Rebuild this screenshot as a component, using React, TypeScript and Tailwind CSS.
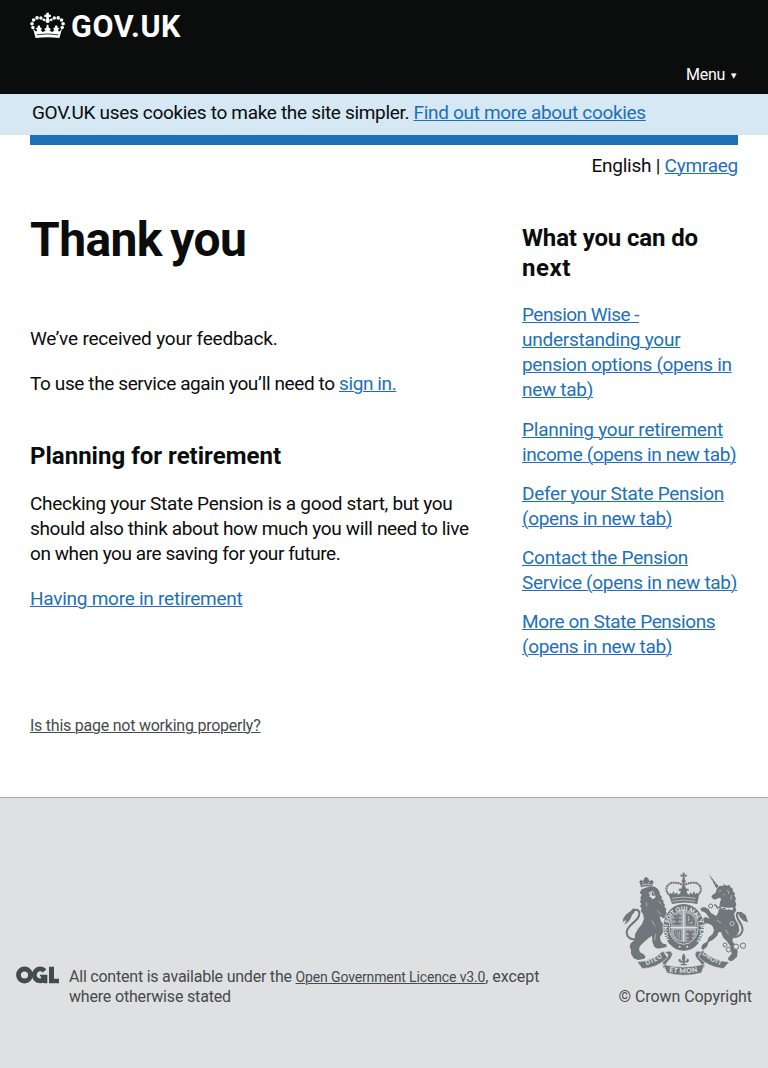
import React from 'react';

const link = 'text-[#1d70b8] underline decoration-1 underline-offset-1';

function Crown() {
  return (
    <svg className="h-[27px] w-[35px]" viewBox="0 0 35 27" fill="#fff">
      <path d="M16.300.8h2.600v2h2v2.200h-2v2.600h-2.600V5h-2V2.800h2z" />
      <circle cx="17.600" cy="8.800" r="2.200" />
      <circle cx="13.900" cy="7.800" r="1.400" />
      <circle cx="10.900" cy="6" r="1.700" />
      <circle cx="7" cy="5.900" r="1.800" />
      <circle cx="3.600" cy="8" r="1.800" />
      <circle cx="2" cy="11.700" r="1.800" />
      <circle cx="2.900" cy="15.500" r="1.700" />
      <circle cx="21.300" cy="7.800" r="1.400" />
      <circle cx="24.300" cy="6" r="1.700" />
      <circle cx="28.200" cy="5.900" r="1.800" />
      <circle cx="31.500" cy="8" r="1.800" />
      <circle cx="33.100" cy="11.700" r="1.800" />
      <circle cx="32.200" cy="15.500" r="1.700" />
      <path d="M3 16.500l3 3.300 1.200-1.800-1.600-1.500 1.800-1 .6-2h1.800l.5 2 1.800.9-1.300 1.500 1.800 2.100 3-1.300-1.500-1.700 2.200-1.200.5-3h1.500l.5 3 2.200 1.200-1.500 1.700 3 1.300 1.800-2.100-1.300-1.500 1.800-.9.500-2h1.800l.6 2 1.800 1-1.600 1.500 1.200 1.800 3-3.300-2.700 9.500q-12-1.600-23.800 0z" />
      <path d="M6.800 22.800q10.700-1.800 21.400 0" fill="none" stroke="#0b0c0c" strokeWidth=".8" />
    </svg>
  );
}

function OglLogo() {
  return (
    <svg className="mt-[-1px] h-[18px] w-[44px] shrink-0" viewBox="18 35 132 54" fill="none" stroke="#454a4c">
      <circle cx="43.500" cy="62" r="18" strokeWidth="14.500" />
      <path d="M104 49.500A18 18 0 1 0 104 74" strokeWidth="14.500" />
      <path d="M89 61h23v26h-10z" fill="#454a4c" stroke="none" />
      <path d="M117 37h15v36h15v14h-30z" fill="#454a4c" stroke="none" />
    </svg>
  );
}

function CoatOfArms() {
  return (
    <svg className="h-[104px] w-[127px]" viewBox="37 22 381 312" fill="#6f777b" stroke="none" fontFamily="Lato, 'Liberation Sans', sans-serif" fontWeight="900">
      <defs>
        <path id="garter" d="M182 229A49 58 0 1 1 262 229" />
        <path id="dieu" d="M110 302Q140 292 165 274" />
        <path id="motto" d="M178 321Q222 331 268 320" />
        <path id="droit" d="M276 269Q304 292 337 303" />
      </defs>

      {/* royal crown */}
      <path d="M218 24h8l-2 7 7-2v8l-7-2 2 8h-8l2-8-7 2v-8l7 2z" />
      <circle cx="222" cy="49" r="6" />
      <g fill="none" stroke="#6f777b" strokeWidth="6">
        <path d="M182 93C160 77 172 56 190 54Q211 54 220 62" strokeDasharray="6 1.500" />
        <path d="M262 93C284 77 272 56 254 54Q233 54 224 62" strokeDasharray="6 1.500" />
        <path d="M222 53v28" />
      </g>
      <path d="M178 92l4-8 5 5 4-10 5 10 6-6 3 8 7-6 1-7h-6v-6h7l4-7h8l4 7h7v6h-6l1 7 7 6 3-8 6 6 5-10 4 10 5-5 6 8-5 26q-38-9-76 0z" />
      <path d="M186 101q36-8 72 0M188 110q34-7 68 0" fill="none" stroke="#dee0e2" strokeWidth="2" />

      {/* lion */}
      <path d="M94 68l-5-17 5-6 6 5 3-8 7-5 6 5 4 8 6-5 6 6-6 15q-16-4-32 2z" />
      <circle cx="109" cy="40" r="3" />
      <path d="M96 61q15-4 30-1M99 52l3 5M119 51l-3 5" fill="none" stroke="#dee0e2" strokeWidth="2" />
      <path d="M96 74L112 68L132 65L144 72L150 82L151 90L157 97L155 103L162 108L161 115L166 120L164 127L170 132L168 140L174 149L176 160L170 169L162 161L150 155L153 168L160 178L163 192L158 207L151 216L153 229L160 237L170 239L171 247L145 252L134 247L128 231L127 213L116 221L104 231L91 244L88 253L91 263L101 268L108 276L104 282L85 286L72 281L64 267L64 255L60 247L63 236L75 226L76 209L85 193L97 178L103 162L100 148L93 139L96 132L91 124L95 118L90 110L94 106L92 99L96 90L90 84Z" />
      <path d="M120 82l8-3 5 3 1 9 4 2-2 7-8 4-4-6-5-2 2-6-4-3z" fill="#dee0e2" />
      <path d="M126 81l6 2-1 5 5 5-7 1-3-5zM120 86l4 1-2 3z" />
      <path d="M146 108l9 12M143 137l10 12M126 168l11 17M138 207l-3 20M109 112l3 13" fill="none" stroke="#dee0e2" strokeWidth="1.500" />
      <path d="M82 222C60 229 45 211 54 193C65 172 90 168 89 145C88 132 72 133 69 142" fill="none" stroke="#6f777b" strokeWidth="6" />
      <path d="M72 129q-8 11-16 15-11 6-16 19v9l10-7q-2 9-7 15 14-6 20-19 3-11 12-19z" />

      {/* unicorn */}
      <path d="M297 28l30 37-7 6z" />
      <path d="M312 46l-5 4M319 55l-5 5" stroke="#dee0e2" strokeWidth="1.500" />
      <path d="M321 73L329 64L342 63L342 57L350 63L359 61L363 68L370 73L369 79L376 86L374 93L379 101L376 109L380 119L377 127L380 137L373 148L377 164L386 179L389 197L383 211L371 219L368 228L378 243L384 260L382 276L369 288L360 289L354 282L366 267L362 245L351 229L340 218L334 202L326 203L323 213L309 226L297 232L292 246L280 256L274 250L279 239L292 231L297 218L309 208L313 197L309 185L300 178L289 176L284 181L276 177L278 162L288 157L300 162L291 148L283 141L275 140L272 131L284 127L294 132L305 146L320 154L326 142L329 126L331 112L335 102L329 99L321 103L313 105L305 98L308 91L318 84Z" />
      <path d="M317 121q19 15 53 11" fill="none" stroke="#dee0e2" strokeWidth="7" />
      <path d="M313 121l6 1 4 8 8-4 5 9 8-4 6 8 9-5" fill="none" stroke="#6f777b" strokeWidth="4" />
      <path d="M327 80l8-3M341 92l5-5M354 76l4 12M365 91l-1 14M322 166l12 9M347 195l10 14" fill="none" stroke="#dee0e2" strokeWidth="1.800" />
      <path d="M372 217C391 218 404 201 396 183C387 163 378 158 382 147C388 139 397 149 401 159" fill="none" stroke="#6f777b" strokeWidth="6" />
      <path d="M384 143l11-1 13 9 4 13 3 9-14-5-11-11z" />
      <g fill="none" stroke="#6f777b" strokeWidth="3">
        <circle cx="367" cy="177" r="6" stroke="#dee0e2" strokeWidth="2" />
        <circle cx="346" cy="241" r="6" />
        <circle cx="357" cy="255" r="7" />
        <circle cx="379" cy="246" r="8" fill="#dee0e2" />
        <circle cx="400" cy="243" r="8" />
        <circle cx="303" cy="124" r="6" />
        <circle cx="293" cy="137" r="4" />
      </g>

      {/* garter and shield */}
      <ellipse cx="222" cy="188" rx="63" ry="72" fill="#dee0e2" />
      <ellipse cx="222" cy="188" rx="61" ry="70" />
      <ellipse cx="222" cy="188" rx="43" ry="51" fill="none" stroke="#dee0e2" strokeWidth="2.500" />
      <text fontSize="17.500" fill="#eceeef"><textPath href="#garter" startOffset="4" textLength="238">HONI SOIT QUI MAL Y PENSE</textPath></text>
      <path d="M184 160q8-18 24-20h28q17 3 24 20v49q-8 18-24 22h-28q-17-4-24-22z" fill="#a5abae" />
      <path d="M222 137v96M182 189h80" stroke="#dee0e2" strokeWidth="3.500" />
      <g stroke="#6f777b" strokeWidth="5" fill="none">
        <path d="M191 154h24M188 165h27M188 177h27M194 151l14 31M207 147l-8 35" />
        <path d="M229 202h25M229 214h24M231 225h14M235 197l11 29M249 197l-12 29" />
        <path d="M232 150q25 5 21 30h-21zM239 158l10 14M248 157l-11 18" />
        <path d="M194 199q0 20 19 26V197zM200 199v18M206 199v22" strokeWidth="3" />
      </g>
      <path d="M198 236q24 12 48 0l4 11q-28 14-56 0z" />
      <circle cx="210" cy="246" r="3" fill="#dee0e2" />
      <circle cx="233" cy="246" r="3" fill="#dee0e2" />

      {/* motto ribbon */}
      <g stroke="#dee0e2" strokeWidth="2">
        <path d="M163 265q14-10 23-3 7 12-12 29-7 7-6 22l-8-4q-5-17 6-26 13-12 8-15z" />
        <path d="M281 265q-14-10-23-3-7 12 12 29 7 7 6 22l8-4q5-17-6-26-13-12-8-15z" />
        <path d="M82 291q45-1 78-32l14 20q-31 31-76 33z" />
        <path d="M267 278l11-22q32 32 81 36l-18 20q-44-4-74-34z" />
        <path d="M160 299q62 17 125-1l-10 27q-52 14-103 0z" />
      </g>
      <g fontSize="19" fill="#dee0e2">
        <text><textPath href="#dieu" textLength="54">DIEU</textPath></text>
        <text fontSize="21"><textPath href="#motto" textLength="86">ET MON</textPath></text>
        <text><textPath href="#droit" textLength="66">DROIT</textPath></text>
      </g>
      <path d="M222 266q-9 12-3 23-7 2-7-7-8 0-5 8 5 7 12 3v5h-6v4h18v-4h-6v-5q8 4 12-3 3-8-5-8 0 9-7 7 6-11-3-23z" />
    </svg>
  );
}

export default function App() {
  return (
    <div className="min-h-[1068px] bg-white font-[Roboto,'Liberation_Sans',sans-serif] text-[19px] leading-[25px] tracking-[-0.3px] text-[#0b0c0c]">
      <header className="flex h-[94px] flex-col justify-between bg-[#0b0c0c] px-[30px] pt-3 pb-[9px] text-white">
        <div className="flex h-[30px] gap-[6px]">
          <Crown />
          <span className="text-[30.5px] leading-[30px] font-bold tracking-[0.6px]">GOV.UK</span>
        </div>
        <div className="flex h-5 items-start justify-end gap-[6px] text-base leading-5">
          <span>Menu</span>
          <span className="w-[7px] pt-px text-[7px] leading-5 font-['DejaVu_Sans']">▼</span>
        </div>
      </header>

      <div className="h-[41px] bg-[#d5e8f3] px-8 pt-[6px] tracking-[-0.32px] whitespace-nowrap">
        GOV.UK uses cookies to make the site simpler.{' '}
        <a href="#" className={link}>Find out more about cookies</a>
      </div>

      <main className="mx-[30px] h-[662px] border-t-10 border-[#1d70b8]">
        <div className="mt-2 text-right tracking-[-0.25px]">
          English | <a href="#" className={link}>Cymraeg</a>
        </div>
        <div className="flex justify-between">
          <div className="w-[450px] pt-[37px] whitespace-nowrap">
            <h1 className="text-[48px] leading-[50px] font-bold tracking-[-0.6px] [word-spacing:-3px]">Thank you</h1>
            <p className="mt-[61px] tracking-[-0.2px]">We’ve received your feedback.</p>
            <p className="mt-5 tracking-[-0.39px]">
              To use the service again you’ll need to <a href="#" className={link}>sign in.</a>
            </p>
            <h2 className="mt-[45px] text-2xl leading-[30px] font-bold tracking-[0.01px]">Planning for retirement</h2>
            <p className="mt-5">
              Checking your State Pension is a good start, but you<br />
              <span className="tracking-[-0.35px]">should also think about how much you will need to live</span><br />
              <span className="tracking-[-0.43px]">on when you are saving for your future.</span>
            </p>
            <p className="mt-5 tracking-[-0.25px]"><a href="#" className={link}>Having more in retirement</a></p>
          </div>
          <aside className="w-[216px] pt-[45px] whitespace-nowrap">
            <h2 className="text-2xl leading-[30px] font-bold">
              <span className="tracking-[-0.14px]">What you can do</span><br />
              <span className="tracking-[0.5px]">next</span>
            </h2>
            <ul className="mt-[19px] flex flex-col gap-[14px]">
              <li className="mb-px"><a href="#" className={link}><span className="tracking-[-0.52px]">Pension Wise -</span><br /><span className="tracking-[-0.25px]">understanding your</span><br /><span className="tracking-[-0.34px]">pension options (opens in</span><br />new tab)</a></li>
              <li><a href="#" className={link}><span className="tracking-[-0.24px]">Planning your retirement</span><br /><span className="tracking-[-0.38px]">income (opens in new tab)</span></a></li>
              <li><a href="#" className={link}><span className="tracking-[-0.27px]">Defer your State Pension</span><br /><span className="tracking-[-0.35px]">(opens in new tab)</span></a></li>
              <li><a href="#" className={link}><span className="tracking-[-0.25px]">Contact the Pension</span><br />Service (opens in new tab)</a></li>
              <li><a href="#" className={link}><span className="tracking-[-0.37px]">More on State Pensions</span><br /><span className="tracking-[-0.35px]">(opens in new tab)</span></a></li>
            </ul>
          </aside>
        </div>
        <p className="mt-[57px] text-base leading-5 tracking-[-0.24px] text-[#454a4c]">
          <a href="#" className="underline decoration-1 underline-offset-1">Is this page not working properly?</a>
        </p>
      </main>

      <footer className="flex h-[271px] justify-between border-t border-[#a1acb2] bg-[#dee0e2] px-4 text-base leading-5 text-[#454a4c]">
        <div className="flex gap-[9px] pt-[169px] tracking-[-0.22px] whitespace-nowrap">
          <OglLogo />
          <p>
            All content is available under the{' '}
            <a href="#" className="text-sm leading-5 tracking-[-0.13px] underline decoration-1 underline-offset-1">Open Government Licence v3.0</a>
            <span className="tracking-[-0.05px]">, except</span><br />
            <span className="tracking-[-0.18px]">where otherwise stated</span>
          </p>
        </div>
        <div className="flex flex-col items-end pt-[74px]">
          <div className="mr-[3px]"><CoatOfArms /></div>
          <p className="mt-[11px] tracking-[-0.06px]">© Crown Copyright</p>
        </div>
      </footer>
    </div>
  );
}
